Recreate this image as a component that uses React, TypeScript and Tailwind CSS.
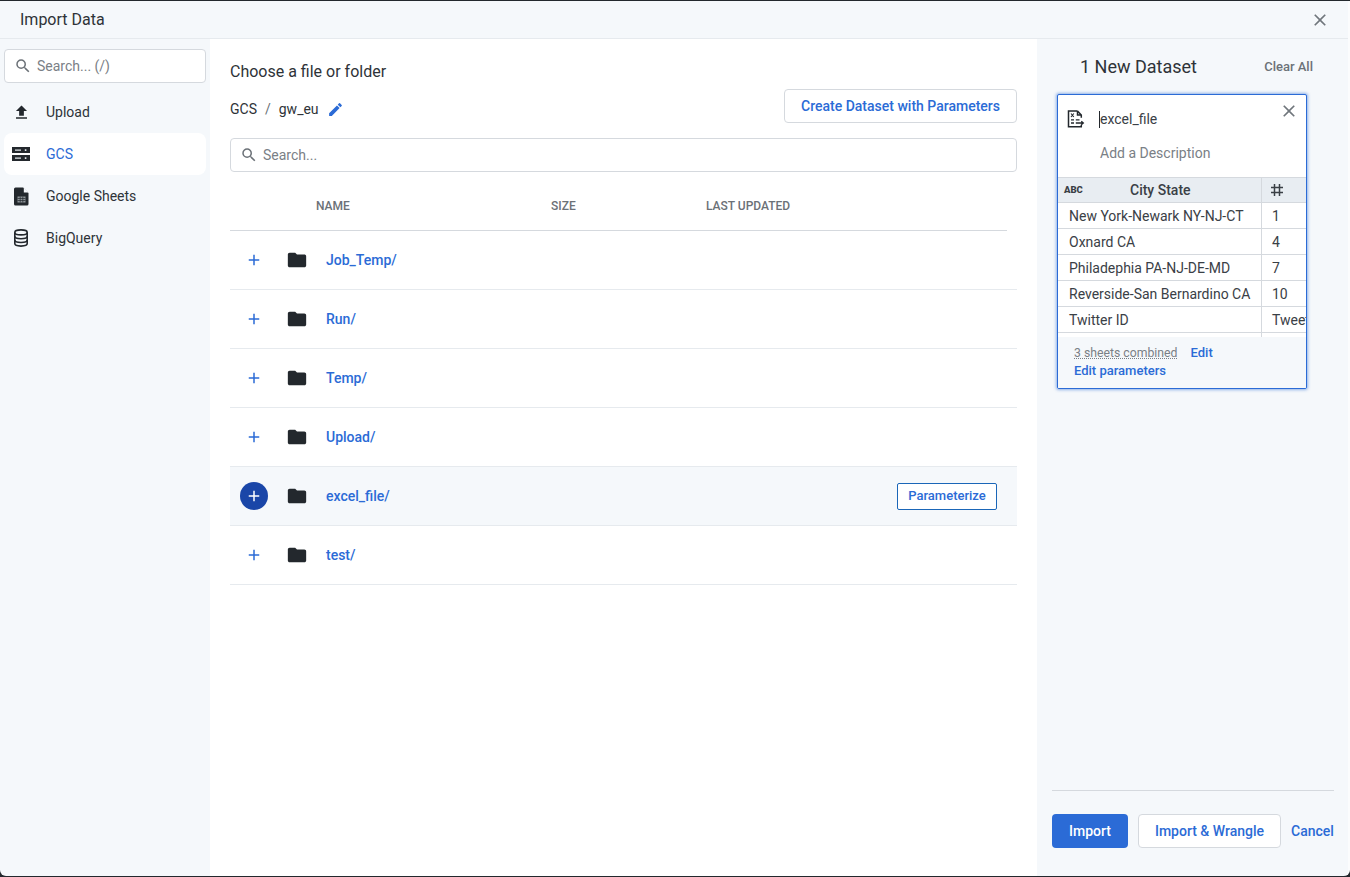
import { MdAdd, MdClose, MdEdit, MdFileUpload, MdFolder, MdSearch } from "react-icons/md";

const folders = ["Job_Temp/", "Run/", "Temp/", "Upload/", "excel_file/", "test/"];

const previewRows = [
  ["New York-Newark NY-NJ-CT", "1"],
  ["Oxnard CA", "4"],
  ["Philadephia PA-NJ-DE-MD", "7"],
  ["Reverside-San Bernardino CA", "10"],
  ["Twitter ID", "Tweet"],
];

function ServerIcon() {
  return (
    <svg width="18" height="14" viewBox="0 0 18 14">
      <path d="M0 0h18v6h-18zM0 8h18v6h-18z" fill="#23282d" />
      <path d="M3 2.500h6v1.200h-6zM3 10.500h6v1.200h-6zM12.800 2.300h1.600v1.600h-1.600zM12.800 10.300h1.600v1.600h-1.600z" fill="#dfe3e7" />
    </svg>
  );
}

function SheetsIcon() {
  return (
    <svg width="15" height="19" viewBox="0 0 15 19">
      <path d="M1.500 0.500h7.700l5.300 5.500v11a1.500 1.500 0 0 1-1.500 1.500h-11.500a1.500 1.500 0 0 1-1.500-1.500v-15a1.500 1.500 0 0 1 1.500-1.500z" fill="#23282d" />
      <path d="M9.800 0.500v5h4.700z" fill="#f5f8fb" />
      <path d="M3.500 9.500h8v6h-8z" fill="#8d9398" />
      <path d="M3.500 11.500h8M3.500 13.500h8M6.200 9.500v6M8.800 9.500v6" stroke="#23282d" strokeWidth="0.700" />
    </svg>
  );
}

function DatabaseIcon() {
  return (
    <svg width="16" height="18" viewBox="0 0 16 18" fill="none" stroke="#23282d" strokeWidth="1.600">
      <ellipse cx="8" cy="3.400" rx="6.200" ry="2.500" />
      <path d="M1.800 3.400v11.200c0 1.400 2.800 2.500 6.200 2.500s6.200-1.100 6.200-2.500v-11.200" />
      <path d="M1.800 7.200c0 1.400 2.800 2.500 6.200 2.500s6.200-1.100 6.200-2.500" />
      <path d="M1.800 11c0 1.400 2.800 2.500 6.200 2.500s6.200-1.100 6.200-2.500" />
    </svg>
  );
}

function ExcelFileIcon() {
  return (
    <svg width="18" height="18" viewBox="0 0 18 18" fill="none" stroke="#23282d" strokeWidth="1.500">
      <path d="M10.500 1h-9v15.800h12.800v-2M10.500 1l3.800 4v2.800M10.500 1v4h3.800" />
      <path d="M4 3.500l2.800 3.500M6.800 3.500l-2.800 3.500" strokeWidth="1.100" />
      <path d="M4 9.800h3M8.800 9.800h3.700M4 13h3M8.800 13h6.700M14.300 11.300l2 1.700l-2 1.700" strokeWidth="1.300" />
    </svg>
  );
}

function HashIcon() {
  return (
    <svg width="14" height="14" viewBox="0 0 14 14" stroke="#3a4046" strokeWidth="1.500">
      <path d="M1 4.500h12M1 9.500h12M4.500 1v12M9.500 1v12" />
    </svg>
  );
}

function SidebarItem({ icon, label, active }: { icon: React.ReactNode; label: string; active?: boolean }) {
  return (
    <div className={`flex h-[42px] items-center rounded-lg ${active ? "bg-white text-[#2b6bd6]" : "text-[#2e3338]"}`}>
      <div className="flex w-[34px] shrink-0 items-center justify-center text-[#23282d]">{icon}</div>
      <span className="ml-[8px] text-sm">{label}</span>
    </div>
  );
}

function SearchBox({ placeholder, className }: { placeholder: string; className: string }) {
  return (
    <div className={`flex h-[34px] items-center rounded border border-[#d5d9de] bg-white ${className}`}>
      <MdSearch size={18} className="ml-[9px] text-[#6b7177]" />
      <span className="ml-[5px] text-sm text-[#7a8086]">{placeholder}</span>
    </div>
  );
}

export default function App() {
  return (
    <div className="h-[877px] w-[1350px] overflow-hidden bg-[#23282d] py-[1px] font-['Roboto',sans-serif]">
      <div className="flex h-full flex-col overflow-hidden rounded-b-[6px] border-r-2 border-[#fbfcfd] bg-[#f5f8fb]">
        {/* Titulo */}
        <div className="flex h-[38px] shrink-0 items-center justify-between border-b border-[#e6eaee] pr-[18px] pl-[20px]">
          <span className="text-base text-[#2e3338]">Import Data</span>
          <MdClose size={20} className="text-[#70767c]" />
        </div>

        <div className="flex min-h-0 flex-1">
          {/* Sidebar */}
          <div className="w-[210px] shrink-0 px-[4px] pt-[10px]">
            <SearchBox placeholder="Search... (/)" className="w-[202px]" />
            <div className="mt-[8px]">
              <SidebarItem icon={<MdFileUpload size={19} />} label="Upload" />
              <SidebarItem icon={<ServerIcon />} label="GCS" active />
              <SidebarItem icon={<SheetsIcon />} label="Google Sheets" />
              <SidebarItem icon={<DatabaseIcon />} label="BigQuery" />
            </div>
          </div>

          {/* Conteudo */}
          <div className="min-w-0 flex-1 bg-white px-[20px] pt-[23px]">
            <h2 className="text-base leading-[19px] text-[#2e3338]">Choose a file or folder</h2>
            <div className="mt-[8px] flex h-[34px] items-center justify-between">
              <div className="mt-[6px] flex items-center text-sm text-[#2e3338]">
                <span>GCS</span>
                <span className="mx-[8px] text-[#6b7177]">/</span>
                <span>gw_eu</span>
                <MdEdit size={17} className="ml-[8px] text-[#2b6bd6]" />
              </div>
              <button className="h-[34px] w-[233px] rounded border border-[#d5d9de] bg-white text-sm font-medium text-[#2b6bd6]">
                Create Dataset with Parameters
              </button>
            </div>
            <SearchBox placeholder="Search..." className="mt-[15px]" />

            <div className="mt-[16px] mr-[10px] flex h-[43px] items-center border-b border-[#d5d9de] pb-[6px] text-xs font-medium text-[#6b7177]">
              <span className="ml-[86px] w-[235px]">NAME</span>
              <span className="w-[155px]">SIZE</span>
              <span>LAST UPDATED</span>
            </div>

            {folders.map((name) => {
              const selected = name === "excel_file/";
              return (
                <div
                  key={name}
                  className={`flex h-[59px] items-center border-b border-[#e6eaee] ${selected ? "bg-[#f5f8fb]" : ""}`}
                >
                  <div className="flex w-[48px] shrink-0 justify-center">
                    {selected ? (
                      <div className="flex h-[28px] w-[28px] items-center justify-center rounded-full bg-[#1a46a8] text-white">
                        <MdAdd size={18} />
                      </div>
                    ) : (
                      <MdAdd size={18} className="text-[#2b6bd6]" />
                    )}
                  </div>
                  <MdFolder size={22} className="ml-[8px] text-[#23282d]" />
                  <span className="ml-[18px] flex-1 text-sm font-medium text-[#2b6bd6]">{name}</span>
                  {selected && (
                    <button className="mr-[20px] h-[27px] w-[100px] rounded-[2px] border border-[#1a66b8] bg-white text-[13px] font-medium text-[#2b6bd6]">
                      Parameterize
                    </button>
                  )}
                </div>
              );
            })}
          </div>

          {/* Painel direito */}
          <div className="flex w-[311px] shrink-0 flex-col">
            <div className="flex h-[55px] items-end justify-between pr-[35px] pb-[17px] pl-[43px]">
              <span className="text-lg leading-[21px] text-[#2e3338]">1 New Dataset</span>
              <span className="text-[13px] leading-[21px] font-medium text-[#6b7177]">Clear All</span>
            </div>

            <div className="ml-[20px] w-[250px] overflow-hidden rounded-[2px] border border-[#2b6bd6] bg-white shadow-[0_0_3px_1px_rgba(43,107,214,0.5)]">
              <div className="relative h-[82px]">
                <div className="flex items-center pt-[15px] pl-[9px]">
                  <ExcelFileIcon />
                  <span className="ml-[14px] border-l border-[#23282d] text-sm leading-[17px] text-[#3a4046]">excel_file</span>
                </div>
                <div className="mt-[15px] pl-[42px] text-sm text-[#7a8086]">Add a Description</div>
                <MdClose size={20} className="absolute top-[6px] right-[7px] text-[#70767c]" />
              </div>

              <div className="flex h-[26px] border-y border-[#d5d9de] bg-[#e8edf2] text-sm font-medium text-[#3a4046]">
                <div className="flex w-[204px] shrink-0 items-center border-r border-[#d5d9de]">
                  <span className="ml-[6px] w-[18px] text-[9.5px] font-black whitespace-nowrap text-[#3a4046]">ABC</span>
                  <span className="ml-[48px]">City State</span>
                </div>
                <div className="flex flex-1 items-center pl-[8px]">
                  <HashIcon />
                </div>
              </div>
              {previewRows.map(([city, value]) => (
                <div key={city} className="flex h-[26px] border-b border-[#d5d9de] text-sm text-[#3a4046]">
                  <div className="flex w-[204px] shrink-0 items-center border-r border-[#d5d9de] pl-[11px] whitespace-nowrap">
                    {city}
                  </div>
                  <div className="flex min-w-0 flex-1 items-center overflow-hidden pl-[10px]">{value}</div>
                </div>
              ))}
              <div className="flex h-[4px]">
                <div className="w-[204px] shrink-0 border-r border-[#d5d9de]" />
              </div>

              <div className="h-[51px] bg-[#f5f8fb] pt-[7px] pl-[16px] text-[13px] leading-[18px] font-medium">
                <div>
                  <span className="text-[12.25px] font-normal text-[#7a8086] underline decoration-dotted">3 sheets combined</span>
                  <span className="ml-[13px] text-[#2b6bd6]">Edit</span>
                </div>
                <div className="text-[#2b6bd6]">Edit parameters</div>
              </div>
            </div>

            <div className="mt-auto mr-[14px] ml-[15px] flex h-[86px] items-start gap-[10px] border-t border-[#d5d9de] pt-[23px]">
              <button className="h-[34px] w-[76px] rounded bg-[#2b6bd6] text-sm font-medium text-white">Import</button>
              <button className="h-[34px] w-[143px] rounded border border-[#d5d9de] bg-white text-sm font-medium text-[#2b6bd6]">
                Import &amp; Wrangle
              </button>
              <span className="text-sm leading-[34px] font-medium text-[#2b6bd6]">Cancel</span>
            </div>
          </div>
        </div>
      </div>
    </div>
  );
}
